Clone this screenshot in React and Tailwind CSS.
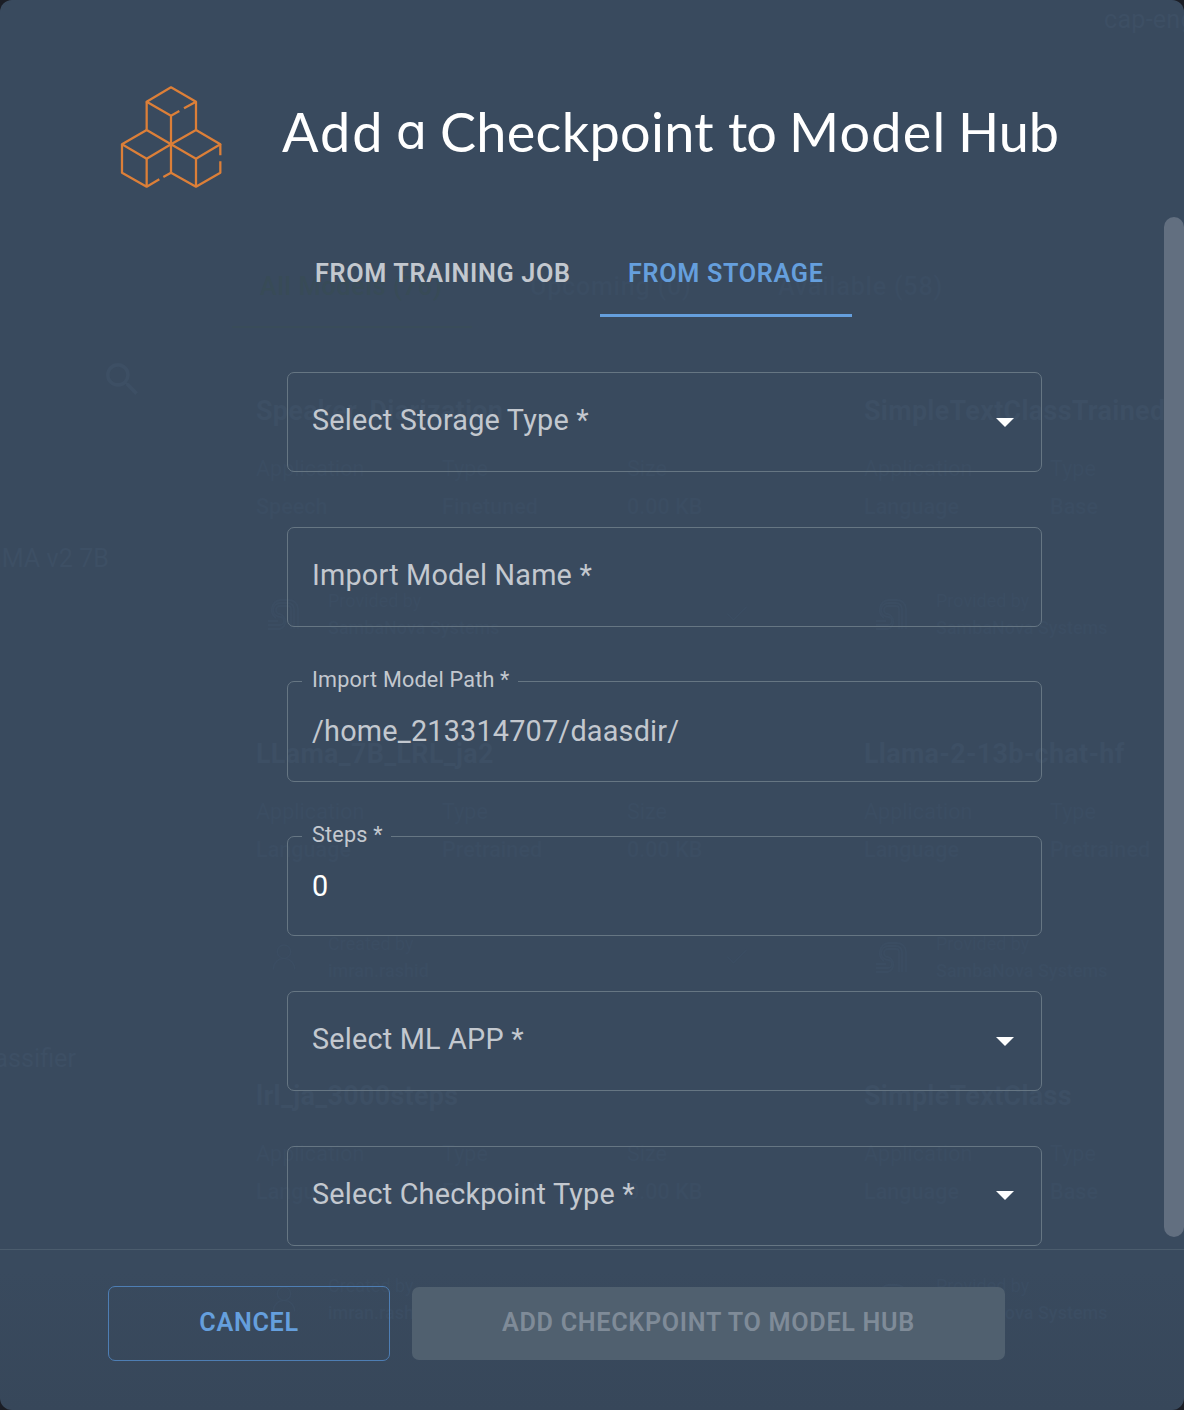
import React from "react";
import { Check, UserRound } from "lucide-react";

function CubesIcon() {
  return (
    <svg
      className="h-[130px] w-[140px] shrink-0"
      viewBox="0 0 420 390"
      fill="none"
      stroke="#dc7f38"
      strokeWidth="6.8"
      strokeLinejoin="round"
    >
      <path d="M213 137 140 95 213 52 288 95 252 115M238 123 213 137V308" />
      <path d="M140 95V180L213 223 288 180V95" />
      <path d="M140 180 66 223 140 266 213 223 288 266 361 223 288 180" />
      <path d="M66 223V308L140 350 178 328M140 266V350M190 321 213 308 288 350 361 308V274M361 256V223M288 266V350" />
    </svg>
  );
}

function Caret() {
  return (
    <svg className="h-[9px] w-[18px]" viewBox="0 0 18 9" fill="#ffffff">
      <path d="M0 0h18L9 9z" />
    </svg>
  );
}

function SelectField({ label }) {
  return (
    <div className="flex h-[99.75px] shrink-0 items-center justify-between rounded-[7px] border border-[#667683] pr-[27px] pl-6 text-[28.8px] font-[450] tracking-[0.2px] text-[#c3c8cf]">
      <span className="pb-1 leading-8">{label}</span>
      <Caret />
    </div>
  );
}

function TextField({ label }) {
  return (
    <div className="flex h-[99.75px] shrink-0 items-center rounded-[7px] border border-[#667683] pl-6 text-[28.8px] font-[450] tracking-[0.2px] text-[#c3c8cf]">
      <span className="pb-1 leading-8">{label}</span>
    </div>
  );
}

function FilledField({ label, children }) {
  return (
    <fieldset className="-mt-[0.75px] h-[100.5px] shrink-0 rounded-[7px] border border-[#667683] pl-6 text-[28.8px] font-[450] tracking-[0.2px] text-[#c3c8cf]">
      <legend className="-ml-[10px] h-px pr-[8px] pl-[10px] text-[21.6px] leading-[1px]">
        <span className="inline-block -translate-y-[2px]">{label}</span>
      </legend>
      <div className="flex h-[98.5px] items-center leading-8">{children}</div>
    </fieldset>
  );
}

function SambaMark() {
  return (
    <svg className="h-8 w-8" viewBox="0 0 32 32" fill="none" stroke="currentColor" strokeWidth="1.8">
      <path d="M0 31h12a8 8 0 0 0 0-15 4 4 0 0 1 0-8h8a3 3 0 0 1 3 3v20" />
      <path d="M0 27h12a4 4 0 0 0 0-8 7 7 0 0 1 0-14h8a6 6 0 0 1 6 6v20" />
      <path d="M0 23h10M8 20a10 10 0 0 1 4-18h9a9 9 0 0 1 9 9v20" />
    </svg>
  );
}

function ModelCard({ title, app, type, size, by, name, person }) {
  return (
    <div className="h-[342.5px] w-[608px] shrink-0 whitespace-nowrap">
      <div className="h-8 text-[27px] leading-8 font-bold tracking-[0.25px] text-[#3d4f64]">{title}</div>
      <div className="mt-[27px] grid grid-cols-[186px_185px_1fr] gap-y-2 text-[21.6px] leading-[30px]">
        <span>Application</span>
        <span>Type</span>
        <span>Size</span>
        <span className="font-medium">{app}</span>
        <span className="font-medium">{type}</span>
        <span className="font-medium">{size}</span>
      </div>
      <div className="mt-[65px] flex h-[54px] items-center pl-3 text-lg leading-[27px]">
        <div className="w-[60px]">
          {person ? <UserRound className="h-9 w-8" strokeWidth={1} /> : <SambaMark />}
        </div>
        <div className="w-[395px]">
          <div>{by}</div>
          <div className="font-medium">{name}</div>
        </div>
        <Check className="h-7 w-7" strokeWidth={1} />
      </div>
    </div>
  );
}

function ModelListBehind() {
  return (
    <div aria-hidden="true" className="absolute inset-0 overflow-hidden text-[#3b4d62]">
      <div className="flex h-[270px] justify-end pt-1 text-[25.2px] leading-8 tracking-[0.2px]">
        <span className="w-20 whitespace-nowrap text-[#3d4f64]">cap-eng</span>
      </div>
      <div className="flex h-[58px] pl-[232px] text-[25.2px] leading-[34px] font-medium tracking-[0.72px]">
        <span className="w-[270px] pl-7">
          <span className="block text-[#384b57]">All Models (76)</span>
          <span className="mt-[22px] -ml-7 block h-0.5 w-60 bg-[#394c59]" />
        </span>
        <span className="w-[248px] pl-7">Upcoming (0)</span>
        <span className="pl-7">Available (58)</span>
      </div>
      <div className="flex">
        <div className="w-[256px] shrink-0 text-[25.2px] leading-[34px] text-[#3d4f64]">
          <svg className="mt-[35px] ml-[106px] h-8 w-8" viewBox="3 3 17.5 17.5" fill="currentColor">
            <path d="M15.5 14h-.79l-.28-.27A6.47 6.47 0 0 0 16 9.5 6.5 6.5 0 1 0 9.5 16c1.61 0 3.09-.59 4.23-1.57l.27.28v.79l5 4.99L20.49 19l-4.99-5zm-6 0C7.01 14 5 11.99 5 9.5S7.01 5 9.5 5 14 7.01 14 9.5 11.99 14 9.5 14z" />
          </svg>
          <div className="mt-[147px] flex w-[109px] justify-end whitespace-nowrap">LLaMA v2 7B</div>
          <div className="mt-[466px] flex w-[76px] justify-end whitespace-nowrap">Classifier</div>
        </div>
        <div className="mt-[67px] shrink-0">
          <div className="flex">
            <ModelCard title="Speaker_Diarization" app="Speech" type="Finetuned" size="0.00 KB" by="Provided by" name="SambaNova Systems" />
            <ModelCard title="SimpleTextClassTrained" app="Language" type="Base" size="0.00 KB" by="Provided by" name="SambaNova Systems" />
          </div>
          <div className="flex">
            <ModelCard title="LLama_7B_LRL_ja2" app="Language" type="Pretrained" size="0.00 KB" by="Created by" name="imran.rashid" person />
            <ModelCard title="Llama-2-13b-chat-hf" app="Language" type="Pretrained" size="0.00 KB" by="Provided by" name="SambaNova Systems" />
          </div>
          <div className="flex">
            <ModelCard title="lrl_ja_3000steps" app="Language" type="Finetuned" size="0.00 KB" by="Created by" name="imran.rashid" person />
            <ModelCard title="SimpleTextClass" app="Language" type="Base" size="0.00 KB" by="Provided by" name="SambaNova Systems" />
          </div>
        </div>
      </div>
    </div>
  );
}

export default function App() {
  return (
    <div className="h-[1410px] w-[1184px] bg-[#1b1e26] font-['Roboto',sans-serif]">
      <div className="relative h-full overflow-hidden rounded-xl bg-linear-to-b from-[#394a5e] from-90% to-[#37475a]">
        <ModelListBehind />
        <div className="relative flex h-full flex-col">
          <header className="flex h-[217px] shrink-0 items-start pt-[70px] pl-[100px]">
            <CubesIcon />
            <h1 className="flex pt-6 pl-[42px] font-['Lato',sans-serif] text-[54px] leading-[75px] whitespace-pre text-white">
              <span className="w-[114px] tracking-[2px]">Add</span>
              <span className="w-[44px] font-['Inter',sans-serif] text-[50px] font-normal [font-feature-settings:'cv11']">a</span>
              <span className="w-[288px] tracking-[0.3px]">Checkpoint</span>
              <span className="w-[61px] tracking-[-1px]">to</span>
              <span className="w-[169px] tracking-[1.2px]">Model</span>
              <span>Hub</span>
            </h1>
          </header>

          <main className="flex h-[1032px] shrink-0 justify-between">
            <div className="ml-[287px] flex w-[755px] flex-col">
              <nav className="flex h-[100px] shrink-0 text-[25.2px] leading-[34px] font-semibold tracking-[0.68px] text-[#c3c8cf]">
                <span className="w-[313px] pt-10 pl-[28px]">FROM TRAINING JOB</span>
                <span className="w-[252px] border-b-[3px] border-[#659fdd] pt-10 pl-[28px] text-[#659fdd]">
                  FROM STORAGE
                </span>
              </nav>
              <div className="mt-[55.25px] flex flex-col gap-[55px]">
                <SelectField label="Select Storage Type *" />
                <TextField label="Import Model Name *" />
                <FilledField label="Import Model Path *">/home_213314707/daasdir/</FilledField>
                <FilledField label="Steps *">
                  <span className="text-white">0</span>
                </FilledField>
                <SelectField label="Select ML APP *" />
                <SelectField label="Select Checkpoint Type *" />
              </div>
            </div>
            <div className="h-[1020px] w-5 rounded-full bg-[#626f80]" />
          </main>

          <footer className="flex grow items-start gap-[22px] border-t border-[#4b5c6d] pt-9 pl-[108px] text-[25.2px] font-semibold tracking-[0.68px]">
            <button className="h-[75px] w-[282px] rounded-[7px] border border-[#4e7eb4] pb-px text-[#659fdd]">
              CANCEL
            </button>
            <button className="mt-px h-[73px] w-[593px] rounded-[7px] bg-[#50606f] pb-px text-[#7f8b98]">
              ADD CHECKPOINT TO MODEL HUB
            </button>
          </footer>
        </div>
      </div>
    </div>
  );
}
